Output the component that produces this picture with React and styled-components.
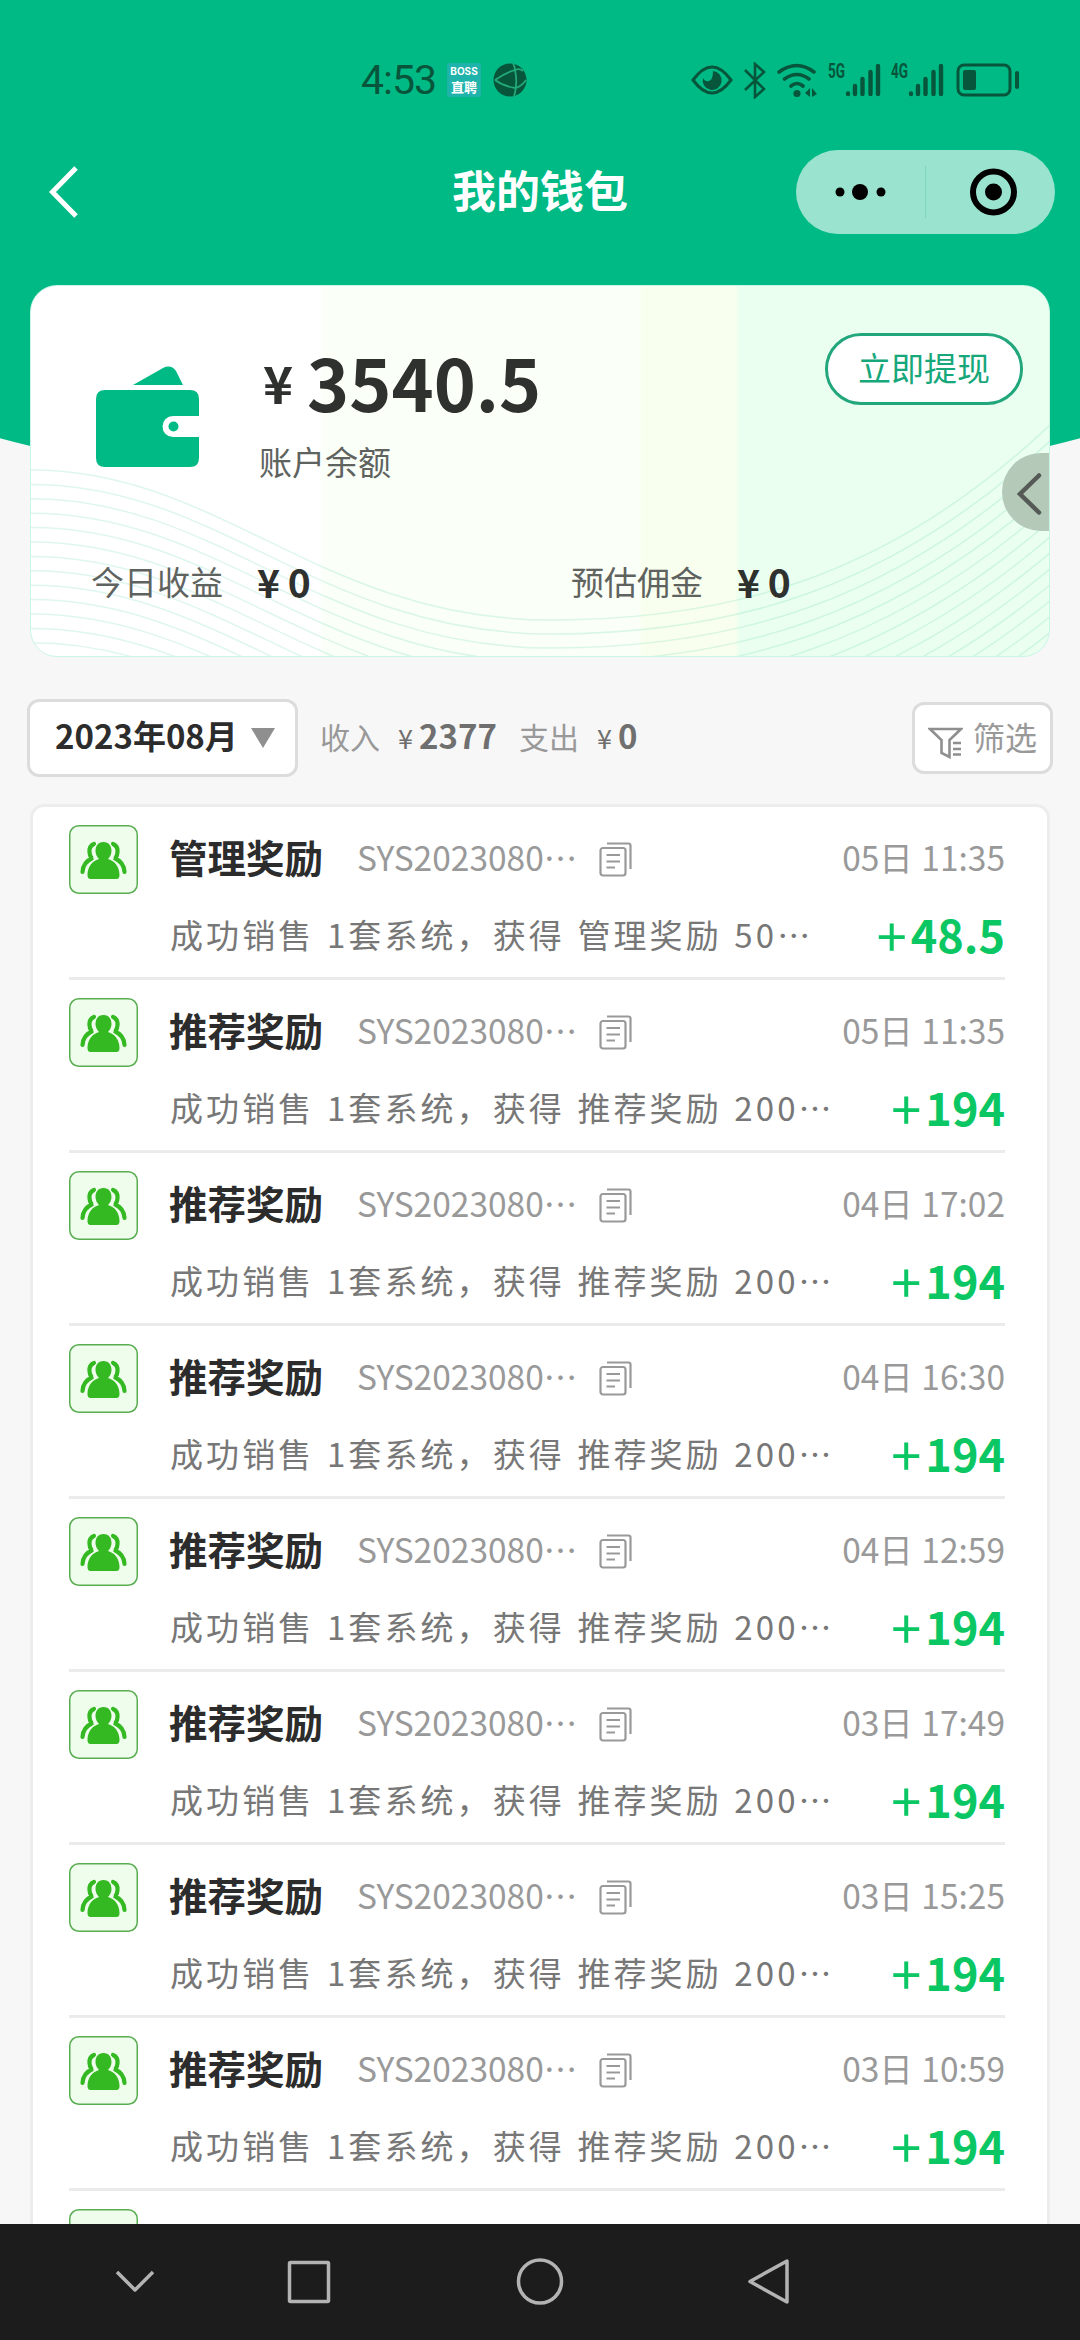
import React from 'react';
import styled, { createGlobalStyle } from 'styled-components';

const GlobalStyle = createGlobalStyle`
  * {
    box-sizing: border-box;
  }
  body {
    margin: 0;
    background: #f7f7f7;
    font-family: 'Noto Sans CJK SC', sans-serif;
  }
`;

const Screen = styled.div`
  position: relative;
  display: flex;
  flex-direction: column;
  width: 1080px;
  height: 2340px;
  overflow: hidden;
`;

const Backdrop = styled.div`
  position: absolute;
  inset: 0 0 auto 0;
  z-index: -1;
  height: 520px;
  background: #00ba85;
  clip-path: circle(2093px at 540px -1584px);
`;

const StatusBar = styled.header`
  display: flex;
  flex: none;
  align-items: center;
  height: 128px;
  padding: 32px 59px 0 361px;
  color: #07563c;
`;

const Time = styled.span`
  width: 86px;
  font: 400 41px/40px Roboto, sans-serif;
  letter-spacing: -1px;
`;

const BossBadge = styled.span`
  display: flex;
  flex-direction: column;
  align-items: center;
  justify-content: center;
  width: 34px;
  height: 34px;
  margin-right: 12px;
  background: #1fb3ac;
  color: #fff;
`;

const BadgeBrand = styled.span`
  font: 700 10px/12px Inter, sans-serif;
`;

const BadgeName = styled.span`
  font-size: 13px;
  font-weight: 700;
  line-height: 19px;
`;

const StatusIcons = styled.div`
  display: flex;
  align-items: center;
  margin-left: auto;
`;

const StatusSvg = styled.svg`
  display: block;
  flex: none;
  margin-left: ${({ $gap }) => $gap || 0}px;
`;

const Network = styled.span`
  align-self: flex-start;
  width: 17px;
  margin-left: 10px;
  font: 700 20px/19px 'Roboto', sans-serif;
  white-space: nowrap;
  transform: scaleX(0.68);
  transform-origin: left;
`;

const TitleBar = styled.div`
  display: grid;
  grid-template-columns: 259px 1fr 259px;
  flex: none;
  align-items: center;
  height: 127px;
  padding: 0 25px;
`;

const Title = styled.h1`
  margin: 0 0 6px;
  color: #fff;
  font-size: 44px;
  font-weight: 700;
  line-height: 56px;
  text-align: center;
`;

const Capsule = styled.div`
  width: 259px;
  height: 84px;
  border-radius: 42px;
  background: #9ae4cf;
`;

const BalanceCard = styled.section`
  position: relative;
  display: flex;
  flex: none;
  flex-direction: column;
  height: 372px;
  margin: 30px 30px 0;
  padding: 47px 26px 0 60px;
  overflow: hidden;
  border: 1px solid #c9f5e6;
  border-radius: 27px;
  background: linear-gradient(
    90deg,
    #fff 0 288px,
    #fafff8 292px 608px,
    #f9ffee 612px 704px,
    #ebfff0 708px
  );
`;

const Waves = styled.svg`
  position: absolute;
  inset: 0;
`;

const BalanceTop = styled.div`
  position: relative;
  display: flex;
  align-items: flex-start;
  height: 223px;
`;

const WalletIcon = styled.svg`
  flex: none;
  margin: 33px 59px 0 5px;
`;

const Balance = styled.div`
  flex: 1;
  color: #2f312f;
  font-size: 71.5px;
  font-weight: 700;
  line-height: 96px;
`;

const BalanceSign = styled.span`
  position: relative;
  top: -8px;
  margin: 0 14px 0 4px;
  font-size: 51px;
`;

const Caption = styled.div`
  color: #5f6360;
  font-size: 33px;
  font-weight: 400;
  line-height: 46px;
`;

const WithdrawButton = styled.button`
  width: 198px;
  height: 72px;
  padding: 0 0 5px;
  border: 3px solid #22a67c;
  border-radius: 36px;
  background: #fff;
  color: #16a77a;
  font: 400 33px/60px 'Noto Sans CJK SC', sans-serif;
  white-space: nowrap;
`;

const Figures = styled.div`
  position: relative;
  display: grid;
  grid-template-columns: 480px 1fr;
`;

const Figure = styled.div`
  display: flex;
  align-items: center;
  color: #2f312f;
  font-size: 39px;
  font-weight: 700;
  line-height: 50px;
  word-spacing: -1px;

  ${Caption} {
    width: 166px;
  }
`;

const FloatTab = styled.div`
  position: absolute;
  top: 167px;
  right: -1px;
  width: 48px;
  height: 78px;
  border-radius: 39px 0 0 39px;
  background: #b5c9b8;
`;

const FilterRow = styled.div`
  display: flex;
  flex: none;
  align-items: center;
  height: 78px;
  margin: 42px 27px 27px;
  color: #999;
  font-size: 30px;
`;

const MonthPicker = styled.div`
  display: flex;
  align-items: center;
  width: 271px;
  height: 78px;
  margin-right: 22px;
  padding: 0 20px 7px 25px;
  border: 3px solid #dcdcdc;
  border-radius: 12px;
  background: #fff;
  color: #2c2c2c;
  font-size: 33px;
  font-weight: 700;
  white-space: nowrap;
`;

const Arrow = styled.i`
  margin: 6px 0 0 auto;
  border: 12px solid transparent;
  border-top: 20px solid #8f8f8f;
  border-bottom: 0;
`;

const Total = styled.span`
  margin-right: 22px;
  padding-bottom: 6px;
  white-space: nowrap;
`;

const TotalValue = styled.b`
  margin-left: 18px;
  color: #6f6f6f;
  font-size: 33px;

  small {
    margin-right: 6px;
    font-size: 27px;
    font-weight: 400;
  }
`;

const FilterButton = styled.div`
  display: flex;
  align-items: center;
  width: 141px;
  height: 72px;
  margin-left: auto;
  padding: 0 0 5px 13px;
  border: 3px solid #dcdcdc;
  border-radius: 12px;
  background: #fff;
  font-size: 32px;
  white-space: nowrap;

  svg {
    margin: 14px 10px 0 0;
  }
`;

const List = styled.main`
  flex: 1;
  min-height: 0;
  margin: 0 30px;
  padding: 0 42px 0 36px;
  overflow: hidden;
  border: 3px solid #ededed;
  border-bottom: 0;
  border-radius: 14px 14px 0 0;
  background: #fff;
`;

const Row = styled.article`
  display: grid;
  grid-template-columns: 69px 1fr;
  column-gap: 31px;
  height: 173px;
  padding-top: 18px;
  border-bottom: 3px solid #ebebeb;
`;

const Avatar = styled.svg`
  display: block;
`;

const RowLine = styled.div`
  display: flex;
  align-items: center;
  height: 69px;
  color: #999;
  font-size: 33.5px;
  white-space: nowrap;

  svg {
    margin: 0 0 0 22px;
  }
`;

const RowTitle = styled.h2`
  width: 188px;
  margin: 0 0 8px;
  color: #2c2c2c;
  font-size: 38.5px;
  font-weight: 700;
`;

const OrderNo = styled.span`
  width: 220px;
  margin-bottom: 7px;
`;

const Stamp = styled.time`
  margin: 0 0 7px auto;
  word-spacing: 1px;
`;

const Detail = styled(RowLine)`
  grid-column: 2;
  height: 82px;
  padding: 0 0 4px 1px;
  color: #777;
`;

const DetailText = styled.span`
  font-size: 33px;
  letter-spacing: 3.1px;
  word-spacing: 2px;
`;

const Amount = styled.b`
  display: flex;
  align-items: center;
  margin-left: auto;
  color: #0bc763;
  font-size: 45px;
  line-height: 60px;
`;

const Plus = styled.span`
  margin-right: 4px;
  font-size: 54px;
  font-weight: 400;
`;

const NavBar = styled.nav`
  flex: none;
  height: 116px;
  background: #1b1c1b;
`;

const records = [
  { title: '管理奖励', stamp: '05日 11:35', gain: '50', amount: '48.5' },
  { title: '推荐奖励', stamp: '05日 11:35', gain: '200', amount: '194' },
  { title: '推荐奖励', stamp: '04日 17:02', gain: '200', amount: '194' },
  { title: '推荐奖励', stamp: '04日 16:30', gain: '200', amount: '194' },
  { title: '推荐奖励', stamp: '04日 12:59', gain: '200', amount: '194' },
  { title: '推荐奖励', stamp: '03日 17:49', gain: '200', amount: '194' },
  { title: '推荐奖励', stamp: '03日 15:25', gain: '200', amount: '194' },
  { title: '推荐奖励', stamp: '03日 10:59', gain: '200', amount: '194' },
];

const Bars = () => (
  <StatusSvg width="36" height="34" viewBox="0 0 36 34" stroke="currentColor" strokeWidth="4.4" strokeLinecap="round">
    <path d="M3 30.5v.5M10 23v8M17.5 16v15M25.5 9v22M33 3v28" />
  </StatusSvg>
);

const People = () => (
  <Avatar width="69" height="69" viewBox="0 0 69 69">
    <rect x=".75" y=".75" width="67.5" height="67.5" rx="9" fill="#effdec" stroke="#58ad50" strokeWidth="1.5" />
    <path
      d="M25 19Q20 21 20.500 27T24 33Q14 37 13.500 47M44 19Q49 21 48.500 27T45 33Q55 37 55.500 47"
      fill="none"
      stroke="#35b922"
      strokeWidth="4.2"
      strokeLinecap="round"
    />
    <path
      d="M34.500 17C40 17 42.500 21 42.500 26C42.500 29 41 32 39 34C46 36 50.500 42 50.500 50Q50.500 54 47.500 54H21.500Q18.500 54 18.500 50C18.500 42 23 36 30 34C28 32 26.500 29 26.500 26C26.500 21 29 17 34.500 17Z"
      fill="#35b922"
      stroke="#effdec"
      strokeWidth="3"
      paintOrder="stroke"
    />
  </Avatar>
);

const CopyIcon = () => (
  <svg width="33" height="35" viewBox="0 0 33 35" fill="none" stroke="#999" strokeWidth="2.2">
    <rect x="1.500" y="6" width="25" height="27.500" rx="2.500" />
    <path d="M8 1.500h21.500q2 0 2 2V27M7.500 13h13.500M7.500 19.500h13.500M7.500 25.500h8.500" />
  </svg>
);

const Record = ({ title, stamp, gain, amount }) => (
  <Row>
    <People />
    <RowLine>
      <RowTitle>{title}</RowTitle>
      <OrderNo>SYS2023080⋯</OrderNo>
      <CopyIcon />
      <Stamp>{stamp}</Stamp>
    </RowLine>
    <Detail>
      <DetailText>成功销售 1套系统，获得 {title} {gain}⋯</DetailText>
      <Amount><Plus>+</Plus>{amount}</Amount>
    </Detail>
  </Row>
);

const App = () => {
  return (
    <>
      <GlobalStyle />
      <Screen lang='zh-CN'>
        <Backdrop />
        <StatusBar>
          <Time>4:53</Time>
          <BossBadge>
            <BadgeBrand>BOSS</BadgeBrand>
            <BadgeName>直聘</BadgeName>
          </BossBadge>
          <StatusSvg width="34" height="34" viewBox="0 0 34 34" fill="none">
            <circle cx="17" cy="17" r="16.5" fill="#07563c" />
            <path d="M20 0Q22 4 22 7Q12 10 2 17M22 7Q25 20 21 34M22 7Q27 5 30 8M2 17Q10 23 22 25Q28 24 33 17" stroke="#23a878" strokeWidth="1.8" />
          </StatusSvg>
          <StatusIcons>
            <StatusSvg width="42" height="30" viewBox="0 0 42 30">
              <path d="M2 15Q21-11 40 15Q21 41 2 15Z" fill="none" stroke="#07563c" strokeWidth="3" />
              <path d="M22 6a9.500 9.500 0 1 1-10 7q2 4 6 3t4-10Z" fill="#07563c" />
            </StatusSvg>
            <StatusSvg $gap={10} width="24" height="37" viewBox="0 0 24 37" fill="none" stroke="#07563c" strokeWidth="2.6">
              <path d="M2 8L21 27 12 35V2L21 10 2 28" />
            </StatusSvg>
            <StatusSvg $gap={10} width="41" height="35" viewBox="0 0 41 35" fill="none" stroke="#07563c" strokeWidth="3.6" strokeLinecap="round">
              <path d="M2 9Q20-4 37 9M7.5 16Q20 7 32 16M14 23Q20 18 26 23" />
              <circle cx="20" cy="30.5" r="1.8" />
              <path d="M33 25v9l-5-4zM35 34v-9l5 6z" fill="#07563c" stroke="none" />
            </StatusSvg>
            <Network>5G</Network>
            <Bars />
            <Network>4G</Network>
            <Bars />
            <StatusSvg $gap={12} width="65" height="34" viewBox="0 0 65 34">
              <rect x="2" y="2" width="52" height="30" rx="6" fill="none" stroke="#07563c" strokeWidth="3" />
              <rect x="7" y="7" width="13" height="20" rx="2" fill="#07563c" />
              <rect x="59" y="8" width="4" height="18" rx="2" fill="#07563c" />
            </StatusSvg>
          </StatusIcons>
        </StatusBar>

        <TitleBar>
          <svg width="54" height="54" viewBox="0 0 54 54" fill="none" stroke="#fff" strokeWidth="5">
            <path d="M51 3L27.5 27L51 51" />
          </svg>
          <Title>我的钱包</Title>
          <Capsule>
            <svg width="259" height="84" viewBox="0 0 259 84">
              <circle cx="44" cy="42" r="4.5" />
              <circle cx="64" cy="42" r="8" />
              <circle cx="85" cy="42" r="4.5" />
              <path d="M129.5 16v52" stroke="#7fd6bd" />
              <circle cx="197.5" cy="42" r="20.5" fill="none" stroke="#000" strokeWidth="6" />
              <circle cx="197.5" cy="42" r="8.5" />
            </svg>
          </Capsule>
        </TitleBar>

        <BalanceCard>
          <Waves width="1020" height="372" viewBox="0 0 1020 372" fill="none" stroke="#00ba85" strokeOpacity=".13" strokeWidth="1.5">
            {Array.from({ length: 15 }, (_, i) => (
              <path key={i} d={`M0 ${184 + i * 14.4}C190 ${184 + i * 14.4} 290 ${334 + i * 14} 520 ${334 + i * 14}C700 ${334 + i * 14} 860 ${290 + i * 14} 1020 ${138 + i * 16}`} />
            ))}
          </Waves>
          <BalanceTop>
            <WalletIcon width="104" height="102" viewBox="0 0 104 102" fill="#00ba85">
              <path d="M37 19L67 2Q75-2 80 5L87 19Z" />
              <path d="M9 24H94Q103 24 103 33V50H77A10.500 10.500 0 0 0 77 71H103V92Q103 101 94 101H9Q0 101 0 92V33Q0 24 9 24Z" />
              <circle cx="77.5" cy="60.5" r="5" />
            </WalletIcon>
            <Balance>
              <BalanceSign>¥</BalanceSign>3540.5
              <Caption>账户余额</Caption>
            </Balance>
            <WithdrawButton>立即提现</WithdrawButton>
          </BalanceTop>
          <Figures>
            <Figure><Caption>今日收益</Caption>¥ 0</Figure>
            <Figure><Caption>预估佣金</Caption>¥ 0</Figure>
          </Figures>
          <FloatTab>
            <svg width="48" height="78" viewBox="0 0 48 78" fill="none" stroke="#555a56" strokeWidth="4.5" strokeLinecap="round">
              <path d="M37 22.5L18 41L37 59.5" />
            </svg>
          </FloatTab>
        </BalanceCard>

        <FilterRow>
          <MonthPicker>2023年08月<Arrow /></MonthPicker>
          <Total>收入<TotalValue><small>¥</small>2377</TotalValue></Total>
          <Total>支出<TotalValue><small>¥</small>0</TotalValue></Total>
          <FilterButton>
            <svg width="35" height="32" viewBox="0 0 35 32" fill="none" stroke="#8f8f8f" strokeWidth="2.6">
              <path d="M2 2H33L21.5 13V30L13.5 26V13ZM25 16h8M25 22h8M25 27.5h8" />
            </svg>
            筛选
          </FilterButton>
        </FilterRow>

        <List>
          {records.map((record) => (
            <Record key={record.stamp + record.title} {...record} />
          ))}
          <Row><People /></Row>
        </List>

        <NavBar>
          <svg width="1080" height="116" viewBox="0 0 1080 116" fill="none" stroke="#b3b3b3" strokeWidth="3.5" strokeLinejoin="round">
            <path d="M117 48L135 66L153 48" />
            <rect x="289.5" y="38.5" width="39" height="39" rx="1" />
            <circle cx="540" cy="57.5" r="21.5" />
            <path d="M787 37V78L750 57.5Z" />
          </svg>
        </NavBar>
      </Screen>
    </>
  )
}

export default App;
